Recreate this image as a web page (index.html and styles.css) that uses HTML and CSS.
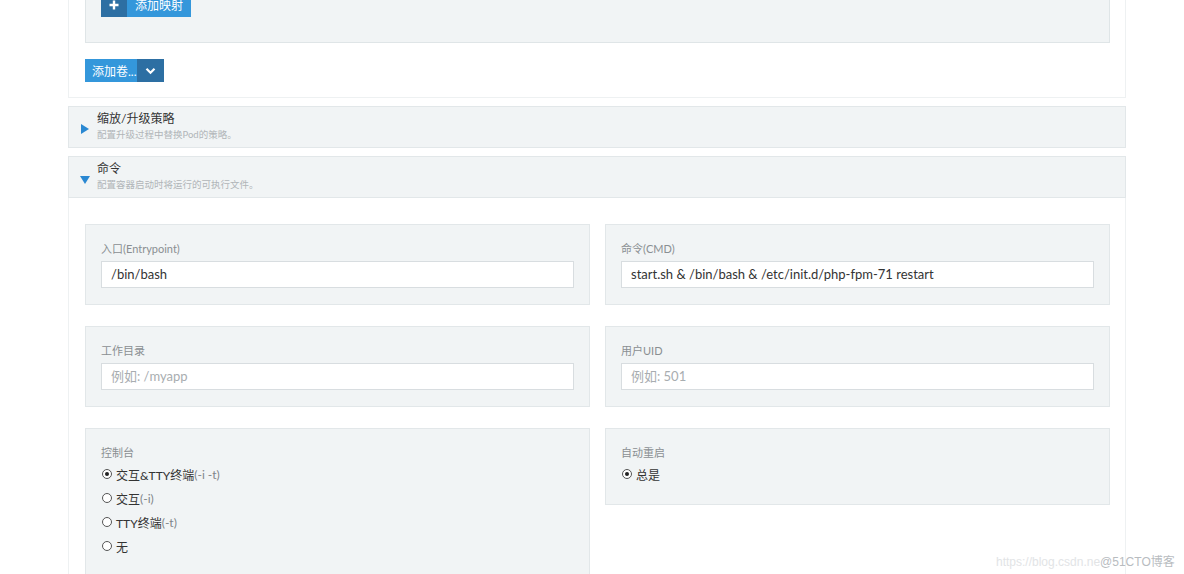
FILE: index.html
```html
<!DOCTYPE html>
<html lang="zh-CN">
<head>
<meta charset="utf-8">
<title>命令</title>
<link rel="stylesheet" href="styles.css">
</head>
<body>
<div class="page">
  <div class="panel">
    <div class="mapbox">
      <button class="btn-map"><span class="btn-icon"><svg width="10" height="10" viewBox="0 0 10 10"><path d="M5 0.5V9.5M0.5 5H9.5" stroke="#fff" stroke-width="2.4"/></svg></span><span class="btn-text">添加映射</span></button>
    </div>
    <div class="btn-group">
      <button class="btn-vol">添加卷...</button><button class="btn-caret"><svg width="11" height="8" viewBox="0 0 11 8"><path d="M1.5 1.8L5.5 5.8L9.5 1.8" fill="none" stroke="#fff" stroke-width="2.2"/></svg></button>
    </div>
  </div>

  <div class="section-head">
    <span class="tri tri-right"></span>
    <div class="head-text">
      <div class="head-title">缩放/升级策略</div>
      <div class="head-sub">配置升级过程中替换Pod的策略。</div>
    </div>
  </div>

  <div class="section-head open">
    <span class="tri tri-down"></span>
    <div class="head-text">
      <div class="head-title">命令</div>
      <div class="head-sub">配置容器启动时将运行的可执行文件。</div>
    </div>
  </div>
  <div class="section-body">
    <div class="grid">
      <div class="field">
        <div class="label">入口(Entrypoint)</div>
        <div class="input">/bin/bash</div>
      </div>
      <div class="field">
        <div class="label">命令(CMD)</div>
        <div class="input">start.sh &amp; /bin/bash &amp; /etc/init.d/php-fpm-71 restart</div>
      </div>
      <div class="field">
        <div class="label">工作目录</div>
        <div class="input placeholder">例如: /myapp</div>
      </div>
      <div class="field">
        <div class="label">用户UID</div>
        <div class="input placeholder">例如: 501</div>
      </div>
      <div class="field tall">
        <div class="label">控制台</div>
        <div class="radio"><span class="dot checked"></span>交互&amp;TTY终端<span class="opt">(-i -t)</span></div>
        <div class="radio"><span class="dot"></span>交互<span class="opt">(-i)</span></div>
        <div class="radio"><span class="dot"></span>TTY终端<span class="opt">(-t)</span></div>
        <div class="radio"><span class="dot"></span>无</div>
      </div>
      <div class="field short">
        <div class="label">自动重启</div>
        <div class="radio"><span class="dot checked"></span>总是</div>
      </div>
    </div>
  </div>
</div>
<div class="watermark"><span class="wm-url">https://blog.csdn.ne</span><span class="wm-name">@51CTO博客</span></div>
</body>
</html>
```

FILE: styles.css
```css
html, body {
  margin: 0;
  padding: 0;
  background: #fff;
  overflow: hidden;
}
body {
  font-family: Lato, "Noto Sans CJK SC", sans-serif;
  color: #333;
  height: 574px;
  position: relative;
}
.page {
  width: 1058px;
  margin: -58px 0 0 68px;
}
.panel {
  border: 1px solid #eef1f2;
  border-top: none;
  padding: 0 15px 15px 16px;
  background: #fff;
}
.mapbox {
  background: #f1f4f5;
  border: 1px solid #dfe5e7;
  padding: 49px 15px 25px;
}
button {
  font-family: inherit;
  border: none;
  padding: 0;
  margin: 0;
  cursor: pointer;
  color: #fff;
  font-size: 12px;
}
.btn-map {
  display: flex;
  height: 25px;
  background: #3497db;
}
.btn-icon {
  width: 26px;
  display: flex;
  align-items: center;
  justify-content: center;
  background: #2d6fa3;
}
.btn-text {
  display: flex;
  align-items: center;
  padding: 0 8px;
  width: 64px;
  box-sizing: border-box;
}
.btn-group {
  display: flex;
  margin-top: 16px;
  height: 23px;
}
.btn-vol {
  background: #3497db;
  width: 52px;
  height: 23px;
  text-align: left;
  padding-left: 7px;
  white-space: nowrap;
  overflow: hidden;
}
.btn-caret {
  background: #2d6fa3;
  width: 27px;
  height: 23px;
  display: flex;
  align-items: center;
  justify-content: center;
}
.section-head {
  margin-top: 8px;
  height: 40px;
  background: #f1f4f5;
  border: 1px solid #e2e7e9;
  display: flex;
  align-items: center;
}
.tri {
  width: 0;
  height: 0;
  margin-left: 12px;
  margin-right: 8px;
  margin-top: 4px;
}
.tri-right {
  border-top: 5px solid transparent;
  border-bottom: 5px solid transparent;
  border-left: 8px solid #2a88d2;
}
.tri-down {
  border-left: 5px solid transparent;
  border-right: 5px solid transparent;
  border-top: 8px solid #2a88d2;
  margin-left: 11px;
  margin-right: 7px;
  margin-top: 6px;
}
.head-text {
  display: flex;
  flex-direction: column;
  margin-top: -2px;
}
.head-title {
  font-size: 12px;
  line-height: 16px;
  color: #333;
}
.head-sub {
  font-size: 9.5px;
  line-height: 15px;
  color: #b0b5b8;
}
.section-body {
  border: 1px solid #eef1f2;
  border-top: none;
  padding: 26px 15px 0 16px;
  height: 420px;
}
.grid {
  display: grid;
  grid-template-columns: 505px 505px;
  column-gap: 15px;
  row-gap: 21px;
  align-items: start;
}
.field {
  background: #f1f4f5;
  border: 1px solid #e2e7e9;
  padding: 15px 15px 16px;
}
.label {
  font-size: 11px;
  line-height: 17px;
  color: #8a8f92;
}
.input {
  margin-top: 4px;
  height: 25px;
  line-height: 25px;
  background: #fff;
  border: 1px solid #d8dde0;
  padding: 0 9px;
  font-size: 13px;
  color: #333;
  white-space: pre;
}
.input.placeholder {
  color: #a8adb0;
}
.field.tall {
  height: 200px;
}
.field.short {
  padding-bottom: 18px;
}
.radio {
  display: flex;
  align-items: center;
  height: 24px;
  font-size: 12px;
  color: #333;
}
.label + .radio {
  margin-top: 1px;
}
.opt {
  color: #808589;
}
.dot {
  width: 8px;
  height: 8px;
  border: 1px solid #555;
  border-radius: 50%;
  margin: 0 4px 0 1px;
  position: relative;
  box-sizing: content-box;
  background: #fff;
}
.dot.checked::after {
  content: "";
  position: absolute;
  left: 2px;
  top: 2px;
  width: 4px;
  height: 4px;
  border-radius: 50%;
  background: #222;
}
.watermark {
  position: absolute;
  left: 996px;
  top: 552px;
  font-family: "Liberation Sans", "Noto Sans CJK SC", sans-serif;
  font-size: 12px;
  white-space: nowrap;
}
.wm-url {
  color: #e2e4e6;
}
.wm-name {
  color: #b8bcbf;
}
```
